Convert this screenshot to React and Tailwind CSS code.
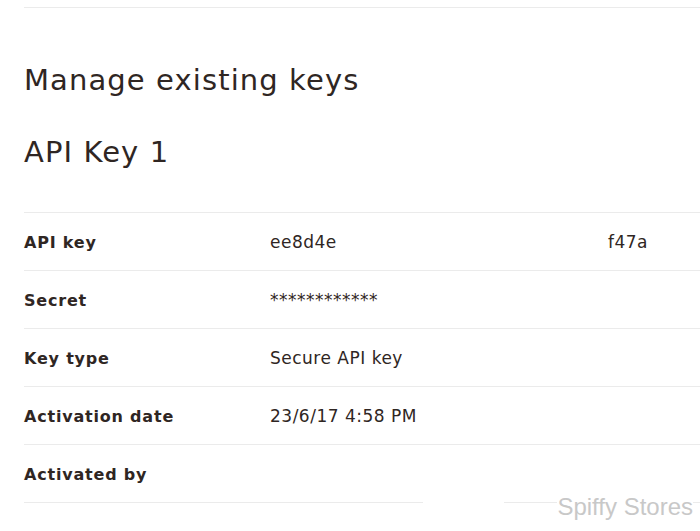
import React from "react";

const rows = [
  ["API key", "ee8d4e", "f47a"],
  ["Secret", "************", ""],
  ["Key type", "Secure API key", ""],
  ["Activation date", "23/6/17 4:58 PM", ""],
  ["Activated by", "", ""],
];

export default function App() {
  return (
    <div
      className="relative w-[700px] h-[531px] overflow-hidden bg-white text-[#2f2623]"
      style={{ fontFamily: "'DejaVu Sans', sans-serif" }}
    >
      <div className="pl-[24px] pt-[7px]">
        <div className="border-t border-[#ebebeb] w-[700px]" />
        <h1 className="mt-[52px] text-[29px] leading-[40px] font-normal tracking-[1.1px]">Manage existing keys</h1>
        <h2 className="mt-[32px] text-[29px] leading-[40px] font-normal tracking-[1.1px]">API Key 1</h2>
        <div className="mt-[40px] w-[700px]">
          {rows.map(([label, value, extra]) => (
            <div
              key={label}
              className="flex items-center pt-[3px] h-[58px] border-t border-[#ebebeb]"
            >
              <div className="w-[246px] text-[16px] font-bold tracking-[0.8px]">{label}</div>
              <div className="w-[338px] text-[17px] tracking-[0.5px]">{value}</div>
              <div className="text-[17px] tracking-[0.5px]">{extra}</div>
            </div>
          ))}
          <div className="flex gap-[81px]">
            <div className="w-[399px] border-t border-[#ebebeb]" />
            <div className="flex-1 border-t border-[#ebebeb]" />
          </div>
        </div>
      </div>
      <div
        className="absolute right-[7px] bottom-[9px] text-[24px] leading-[30px] text-[#c8c8c8] bg-white"
        style={{ fontFamily: "'Liberation Sans', Arial, sans-serif" }}
      >
        Spiffy Stores
      </div>
    </div>
  );
}
